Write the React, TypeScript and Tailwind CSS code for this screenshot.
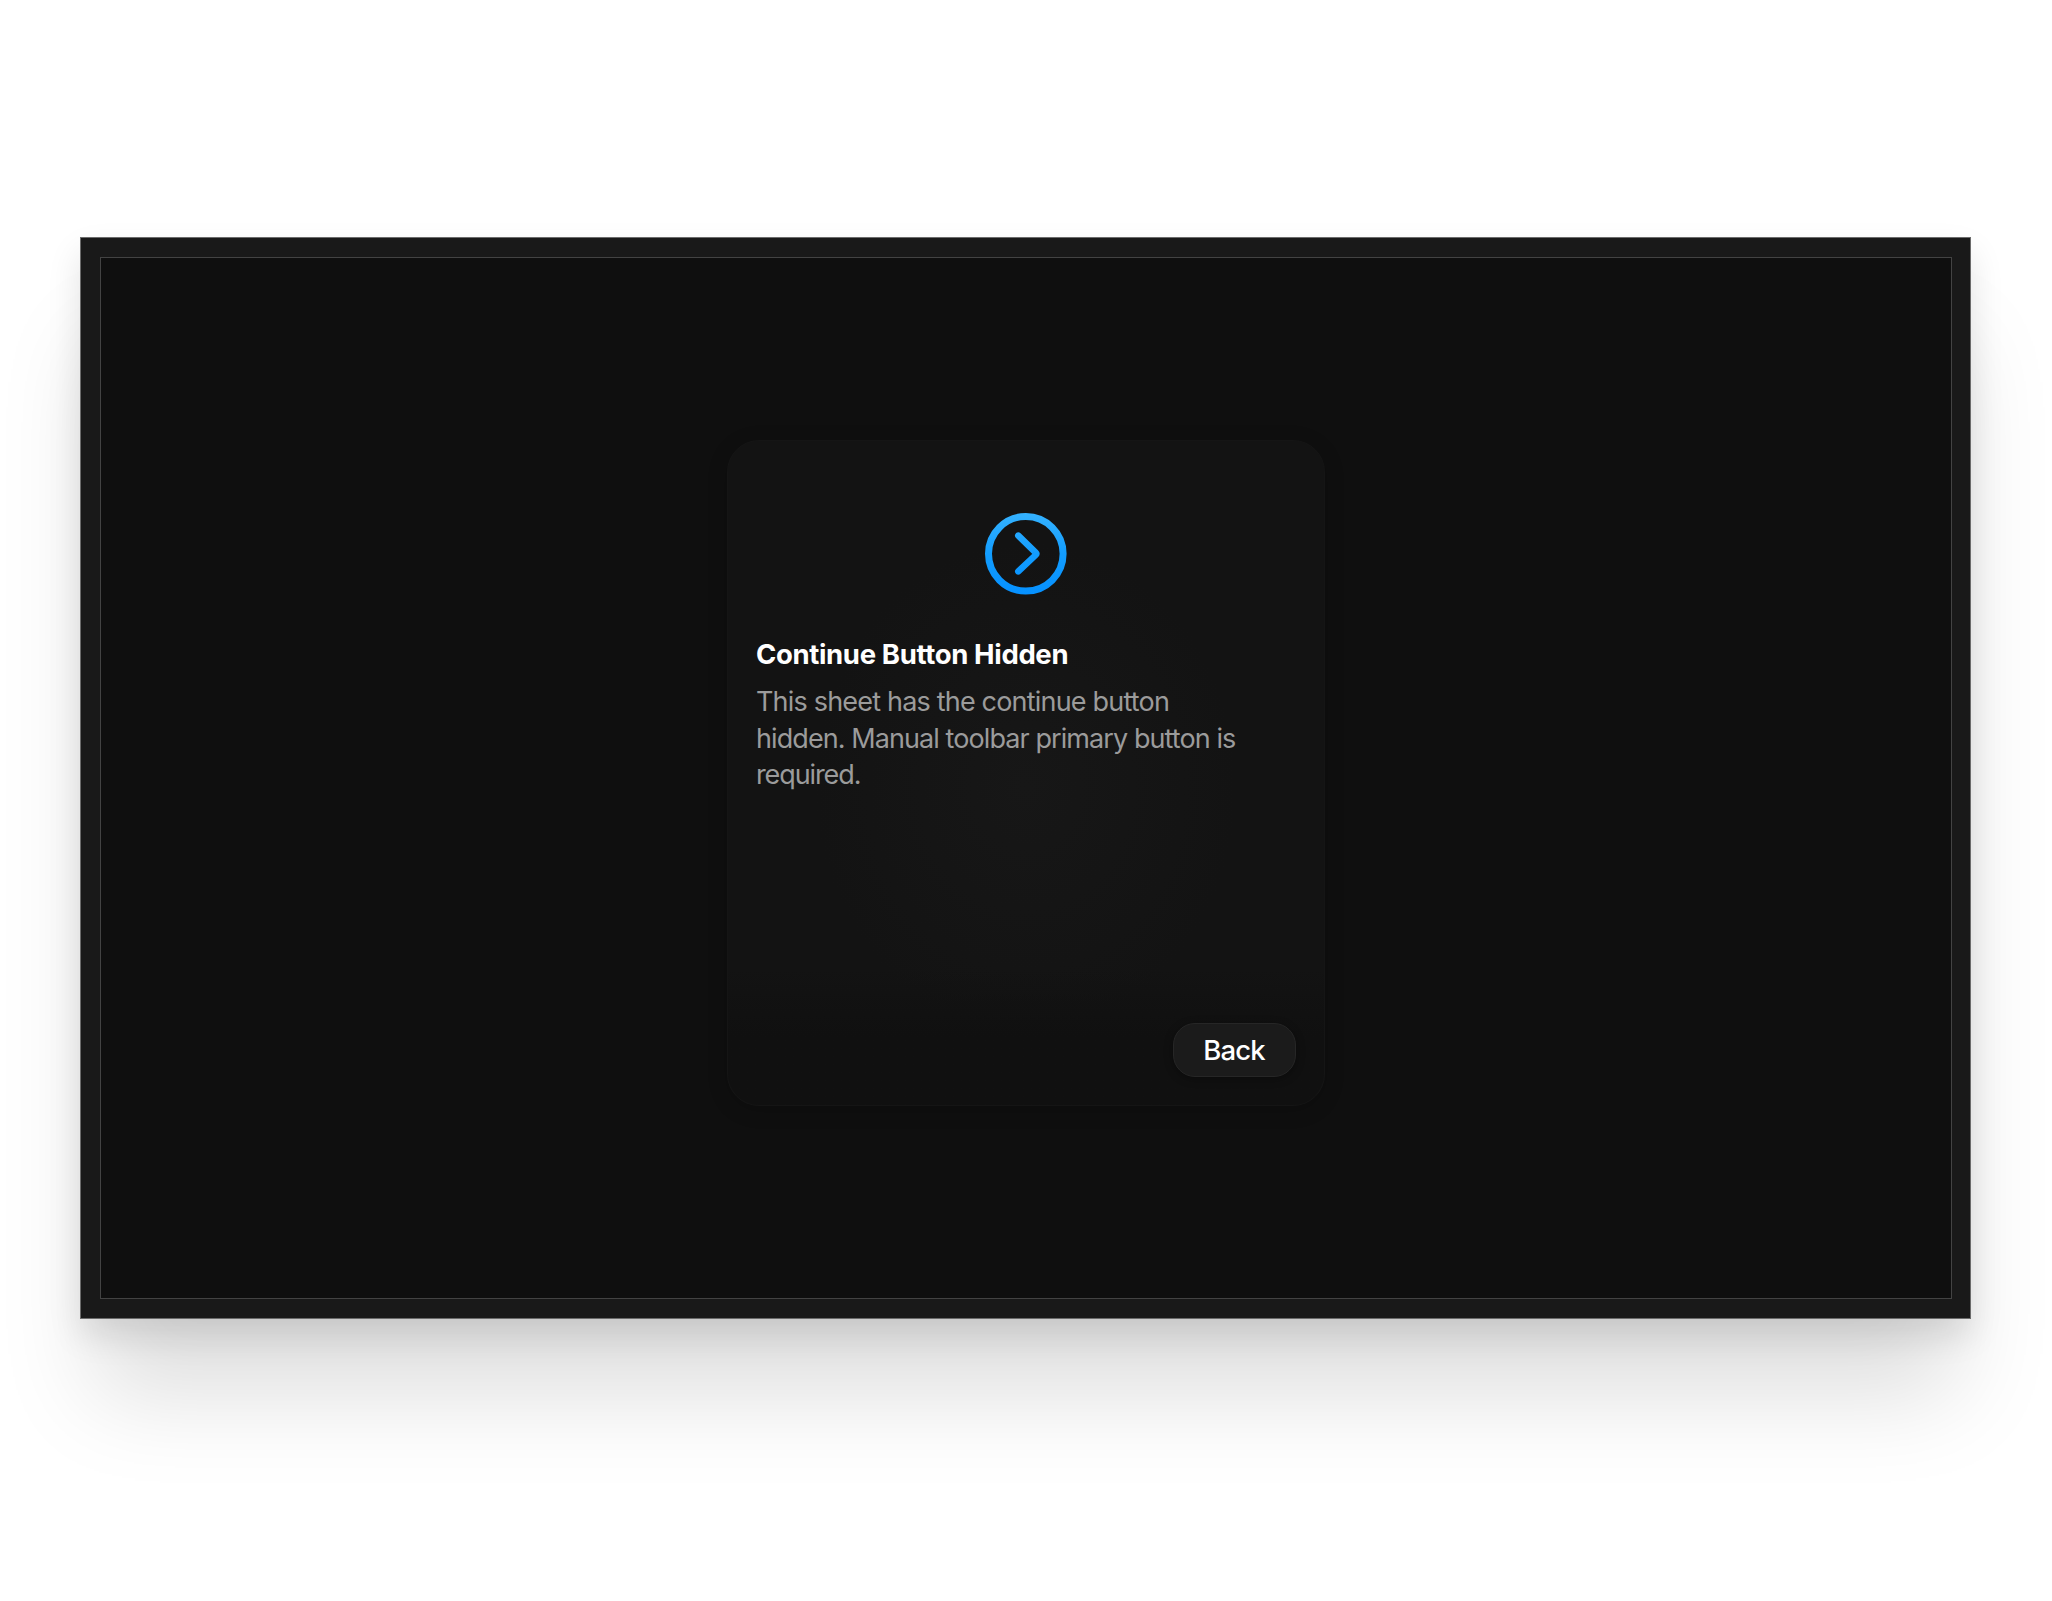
function ContinueIcon() {
  return (
    <svg width="84" height="84" viewBox="0 0 84 84" fill="none" aria-hidden="true">
      <defs>
        <linearGradient id="blue" gradientUnits="userSpaceOnUse" x1="42" y1="0" x2="42" y2="84">
          <stop offset="0" stopColor="#36b3ff" />
          <stop offset="0.5" stopColor="#129dff" />
          <stop offset="1" stopColor="#0590ff" />
        </linearGradient>
      </defs>
      <g stroke="url(#blue)">
        <circle cx="41.8" cy="41.8" r="37.3" strokeWidth="7" />
        <path d="M34.3 23.6 51.7 40.6 Q52.9 41.8 51.7 43 L34.3 59.4" strokeWidth="6.5" strokeLinecap="round" strokeLinejoin="round" />
      </g>
    </svg>
  );
}

function Sheet() {
  return (
    <section className="flex h-[666px] w-[598px] flex-col rounded-[32px] border border-[#151515] bg-[radial-gradient(ellipse_at_50%_52%,#171717_0%,#131313_50%,#131313_100%)] shadow-[0_4px_20px_rgba(0,0,0,0.18)]">
      <div className="flex justify-center pt-[71px]">
        <ContinueIcon />
      </div>
      <div className="px-7 pt-10">
        <h1 className="whitespace-nowrap text-[27.5px] leading-9 font-bold tracking-[-0.35px] text-white">Continue Button Hidden</h1>
        <p className="mt-3 whitespace-nowrap text-[27px] leading-[36.5px] tracking-[-0.92px] text-[#9b9b9b]">
          <span className="tracking-[-0.81px]">This sheet has the continue button</span>
          <br />
          hidden. Manual toolbar primary button is
          <br />
          <span className="tracking-[-1.1px]">required.</span>
        </p>
      </div>
      <footer className="mt-auto flex h-[136px] items-end justify-end rounded-b-[31px] bg-linear-to-b from-transparent to-[#101010] to-50% px-7 pb-7">
        <button className="flex h-[54px] w-[123px] items-center justify-center rounded-[22px] border border-[#262626] bg-[#1b1b1b] pt-[2px] pr-px text-[27.5px] font-medium tracking-[-0.8px] text-white shadow-[0_2px_8px_rgba(0,0,0,0.35)]">
          Back
        </button>
      </footer>
    </section>
  );
}

export default function App() {
  return (
    <main className="h-[1601px] w-[2052px] overflow-hidden bg-white pt-[237px] pl-20 font-['Inter',sans-serif]">
      <div className="h-[1082px] w-[1891px] border border-[#6b6b6b] bg-[#191919] p-[19px] shadow-[0_16px_32px_rgba(0,0,0,0.11),0_90px_90px_-14px_rgba(0,0,0,0.13)]">
        <div className="flex h-[1042px] w-[1852px] justify-center border border-[#434343] bg-[#0f0f0f] pt-[182px]">
          <Sheet />
        </div>
      </div>
    </main>
  );
}
